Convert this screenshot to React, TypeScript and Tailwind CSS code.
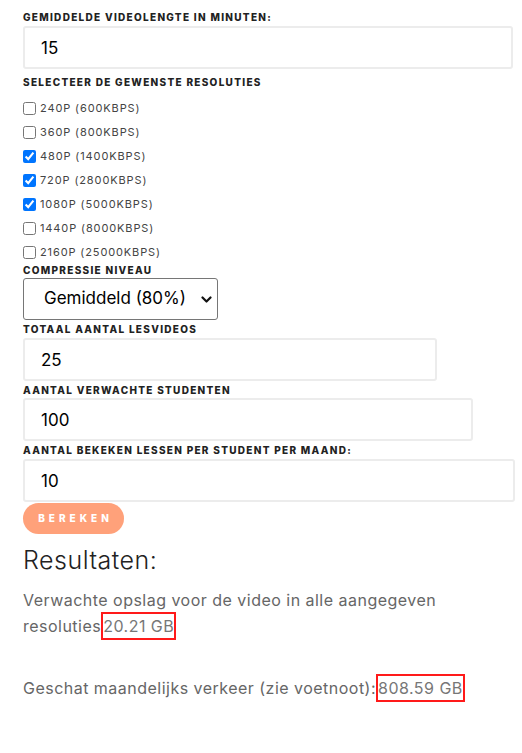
import { useState } from 'react';

const resolutions = [
  { id: '240', label: '240p (600kbps)', checked: false },
  { id: '360', label: '360p (800kbps)', checked: false },
  { id: '480', label: '480p (1400kbps)', checked: true },
  { id: '720', label: '720p (2800kbps)', checked: true },
  { id: '1080', label: '1080p (5000kbps)', checked: true },
  { id: '1440', label: '1440p (8000kbps)', checked: false },
  { id: '2160', label: '2160p (25000kbps)', checked: false },
];

function FieldLabel({ children, className = '' }: { children: React.ReactNode; className?: string }) {
  return (
    <div className={`text-[10px] leading-[13px] font-extrabold uppercase tracking-[0.13em] text-[#222] ${className}`}>
      {children}
    </div>
  );
}

function NumberInput({ value, width, className = '' }: { value: string; width: string; className?: string }) {
  return (
    <input
      type="text"
      defaultValue={value}
      className={`block h-[43px] ${width} rounded-[3px] border-2 border-[#ececec] bg-white pl-4 text-[17px] text-black outline-none ${className}`}
    />
  );
}

export default function App() {
  const [checked, setChecked] = useState(resolutions.map(r => r.checked));

  return (
    <div className="min-h-screen bg-white px-[23px] pt-[11px] font-['Inter',sans-serif]">
      {/* Video length */}
      <FieldLabel>Gemiddelde videolengte in minuten:</FieldLabel>
      <NumberInput value="15" width="w-[490px]" className="mt-[2px]" />

      {/* Resolutions */}
      <FieldLabel className="mt-[7px]">Selecteer de gewenste resoluties</FieldLabel>
      <div className="mt-[7px]">
        {resolutions.map((r, i) => (
          <label key={r.id} className="flex h-[24px] items-center">
            <input
              type="checkbox"
              checked={checked[i]}
              onChange={() => setChecked(prev => prev.map((c, j) => (j === i ? !c : c)))}
              className="mr-[4px] h-[13px] w-[13px]"
            />
            <span className="text-[11px] uppercase tracking-[0.08em] text-[#444]">{r.label}</span>
          </label>
        ))}
      </div>

      {/* Compression */}
      <FieldLabel>Compressie niveau</FieldLabel>
      <div className="relative mt-[1px] w-[195px]">
        <select
          defaultValue="80"
          className="block h-[42px] w-full appearance-none rounded-[3px] border border-[#767676] bg-white pl-5 text-[17px] text-black outline-none"
        >
          <option value="60">Hoog (60%)</option>
          <option value="80">Gemiddeld (80%)</option>
          <option value="90">Laag (90%)</option>
        </select>
        <svg
          className="pointer-events-none absolute right-[6px] top-[17px] h-[9px] w-[11px]"
          viewBox="0 0 11 9"
          fill="none"
          stroke="#111"
          strokeWidth="2.2"
          strokeLinecap="round"
          strokeLinejoin="round"
        >
          <path d="M1.5 2.5 L5.5 6.5 L9.5 2.5" />
        </svg>
      </div>

      <FieldLabel className="mt-[3px]">Totaal aantal lesvideos</FieldLabel>
      <NumberInput value="25" width="w-[414px]" className="mt-[2px]" />

      <FieldLabel className="mt-[3px]">Aantal verwachte studenten</FieldLabel>
      <NumberInput value="100" width="w-[450px]" className="mt-[1px]" />

      <FieldLabel className="mt-[3px]">Aantal bekeken lessen per student per maand:</FieldLabel>
      <NumberInput value="10" width="w-[492px]" className="mt-[2px]" />

      <button className="mt-[1px] h-[31px] w-[101px] rounded-full bg-[#ffa17a] pl-[4px] text-[10px] font-extrabold uppercase tracking-[0.4em] text-white">
        Bereken
      </button>

      {/* Results */}
      <h2 className="mt-[10px] text-[25px] leading-[32px] font-light tracking-[0.02em] text-[#222]">Resultaten:</h2>
      <p className="mt-[12px] text-[16px] leading-[24px] tracking-[0.03em] text-[#666]">
        Verwachte opslag voor de video in alle aangegeven resoluties
        <span className="inline-block border-2 border-[#ff1a1a] text-[#777]">20.21 GB</span>
      </p>
      <p className="mt-[34px] text-[16px] leading-[24px] tracking-[0.03em] text-[#666]">
        Geschat maandelijks verkeer (zie voetnoot):
        <span className="inline-block border-2 border-[#ff1a1a] text-[#777]">808.59 GB</span>
      </p>
    </div>
  );
}
